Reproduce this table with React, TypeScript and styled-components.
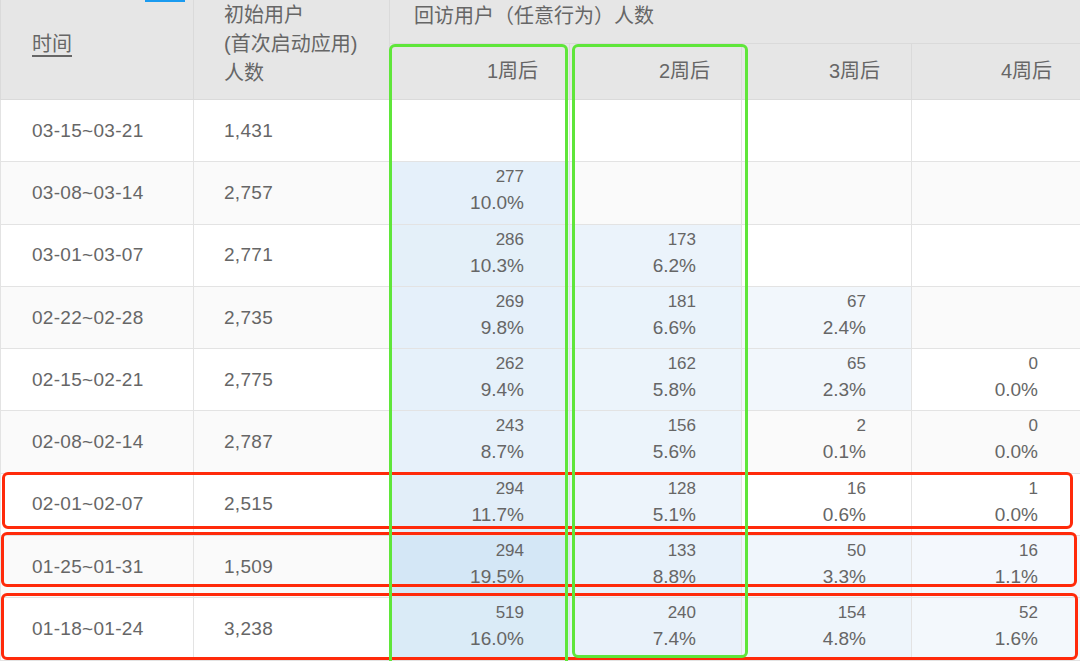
import React from 'react';
import styled, { createGlobalStyle } from 'styled-components';

const GlobalStyle = createGlobalStyle`
  body {
    margin: 0;
    background: #fff;
    overflow: hidden;
  }
`

const Page = styled.div`
  position: relative;
  width: 1080px;
  height: 661px;
  overflow: hidden;
  font-family: "Liberation Sans", "Noto Sans CJK SC", sans-serif;
  color: #666;
`

const Table = styled.table`
  margin-top: -12px;
  width: 1083px;
  table-layout: fixed;
  border-collapse: collapse;
`

const Col = styled.col<{ $w: number }>`
  width: ${p => p.$w}px;
`

const Th = styled.th<{ $align?: 'left' | 'right'; $pad?: number }>`
  background: #e6e6e6;
  border: 1px solid #dadada;
  color: #666;
  font-weight: normal;
  font-size: 20px;
  line-height: 29px;
  text-align: ${p => p.$align || 'left'};
  padding: 0 ${p => p.$align === 'right' ? p.$pad ?? 31 : 0}px 0 ${p => p.$align === 'right' ? 0 : p.$pad ?? 31}px;
  vertical-align: middle;

  > u {
    text-underline-offset: 4px;
  }
`

const GroupRow = styled.tr`
  height: 55px;
`

const SubRow = styled.tr`
  height: 56px;
`

const Row = styled.tr`
  height: 62.3px;

  &:nth-child(even) > td {
    background: #fafafa;
  }
`

const Td = styled.td<{ $pad?: number }>`
  border: 1px solid #e3e3e3;
  font-size: 19px;
  letter-spacing: 0.3px;
  padding: 0 0 0 ${p => p.$pad ?? 31}px;
  vertical-align: middle;
  background: #fff;
`

const RateCell = styled.td<{ $bg?: string }>`
  border: 1px solid #e3e3e3;
  padding: 3px 45px 0 0;
  vertical-align: top;
  text-align: right;
  background: #fff;

  ${Row}:nth-child(even) > & {
    background: ${p => p.$bg || '#fafafa'};
  }
  ${Row}:nth-child(odd) > & {
    background: ${p => p.$bg || '#fff'};
  }

  > .count {
    font-size: 17px;
    line-height: 24px;
  }

  > .rate {
    font-size: 19px;
    line-height: 27px;
  }
`

const Indicator = styled.div`
  position: absolute;
  left: 145px;
  top: 0;
  width: 40px;
  height: 2px;
  background: #1a9bf0;
`

// 标注框
const Frame = styled.div<{ $x: number; $y: number; $w: number; $h: number }>`
  position: absolute;
  left: ${p => p.$x}px;
  top: ${p => p.$y}px;
  width: ${p => p.$w}px;
  height: ${p => p.$h}px;
  border: 3px solid;
  border-radius: 6px;
  box-sizing: border-box;
  pointer-events: none;
`

const RedFrame = styled(Frame)`
  border-color: #ff2a0a;
`

const GreenFrame = styled(Frame)`
  border-color: #5fe63a;
`

type Rate = [number, number]

const rows: [string, string, Rate[]][] = [
  ['03-15~03-21', '1,431', []],
  ['03-08~03-14', '2,757', [[277, 10.0]]],
  ['03-01~03-07', '2,771', [[286, 10.3], [173, 6.2]]],
  ['02-22~02-28', '2,735', [[269, 9.8], [181, 6.6], [67, 2.4]]],
  ['02-15~02-21', '2,775', [[262, 9.4], [162, 5.8], [65, 2.3], [0, 0.0]]],
  ['02-08~02-14', '2,787', [[243, 8.7], [156, 5.6], [2, 0.1], [0, 0.0]]],
  ['02-01~02-07', '2,515', [[294, 11.7], [128, 5.1], [16, 0.6], [1, 0.0]]],
  ['01-25~01-31', '1,509', [[294, 19.5], [133, 8.8], [50, 3.3], [16, 1.1]]],
  ['01-18~01-24', '3,238', [[519, 16.0], [240, 7.4], [154, 4.8], [52, 1.6]]],
]

const weeks = ['1周后', '2周后', '3周后', '4周后']
const widths = [193, 196, 180, 172, 170, 172]

// 按比例给格子上色
function heat(pct: number) {
  if (pct < 1) return undefined
  const t = Math.min(pct / 20, 1)
  const from = [246, 249, 253]
  const to = [211, 231, 246]
  const c = from.map((f, i) => Math.round(f + (to[i] - f) * t))
  return `rgb(${c.join(',')})`
}

export default function App() {
  return (
    <Page>
      <GlobalStyle />
      <Table>
        <colgroup>
          {widths.map((w, i) => <Col key={i} $w={w} />)}
        </colgroup>
        <thead>
          <GroupRow>
            <Th rowSpan={2}><u>时间</u></Th>
            <Th rowSpan={2} $pad={30}>初始用户<br />(首次启动应用)<br />人数</Th>
            <Th colSpan={4} $pad={24}>回访用户（任意行为）人数</Th>
          </GroupRow>
          <SubRow>
            {weeks.map(w => <Th key={w} $align="right">{w}</Th>)}
          </SubRow>
        </thead>
        <tbody>
          {rows.map(([date, total, rates]) => (
            <Row key={date}>
              <Td>{date}</Td>
              <Td $pad={30}>{total}</Td>
              {weeks.map((w, i) => {
                const r = rates[i]
                if (!r) return <RateCell key={w} />
                return (
                  <RateCell key={w} $bg={heat(r[1])}>
                    <div className="count">{r[0]}</div>
                    <div className="rate">{r[1].toFixed(1)}%</div>
                  </RateCell>
                )
              })}
            </Row>
          ))}
        </tbody>
      </Table>
      <Indicator />
      <RedFrame $x={2} $y={472} $w={1071} $h={57} />
      <RedFrame $x={1} $y={532} $w={1076} $h={55} />
      <RedFrame $x={1} $y={593} $w={1077} $h={67} />
      <GreenFrame $x={389} $y={44} $w={179} $h={640} />
      <GreenFrame $x={572} $y={44} $w={176} $h={614} />
    </Page>
  );
}
